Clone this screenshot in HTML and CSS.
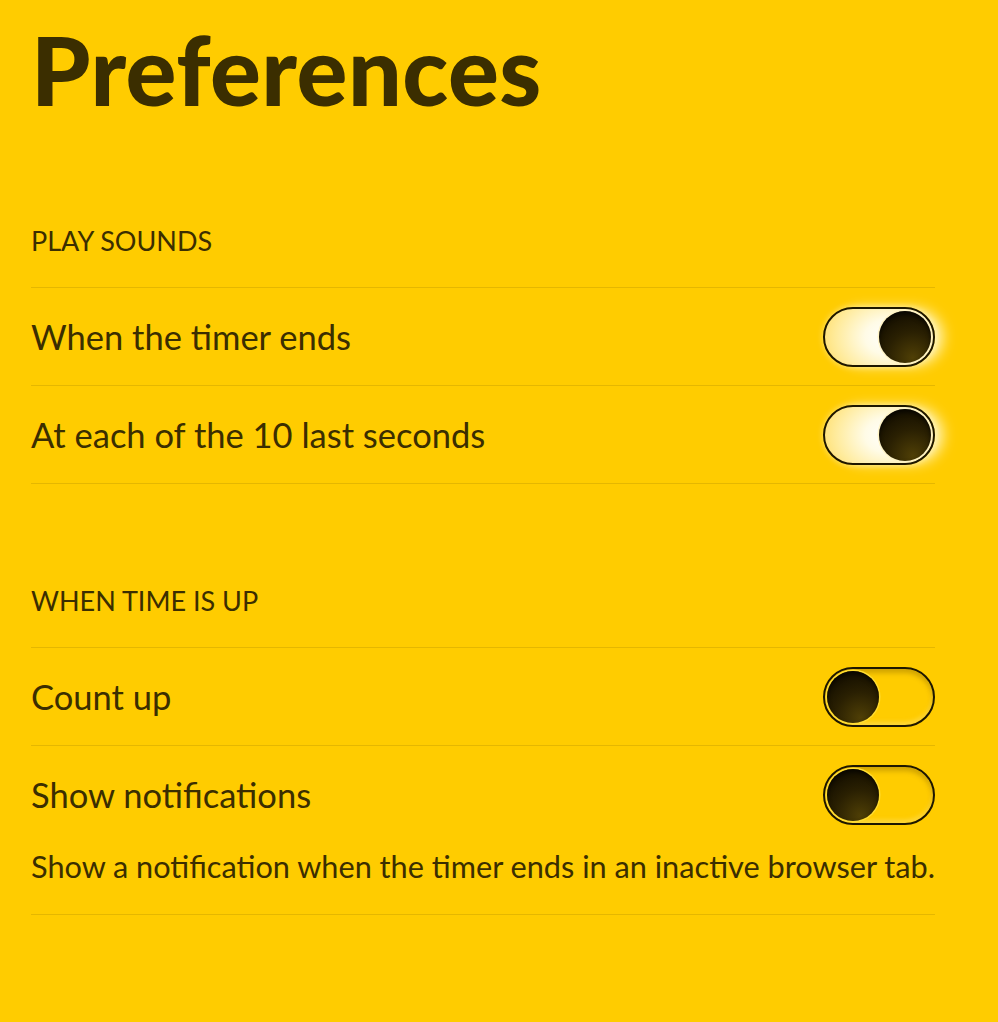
FILE: index.html
```html
<!DOCTYPE html>
<html lang="en">
<head>
    <meta charset="UTF-8">
    <meta name="viewport" content="width=device-width, initial-scale=1.0">
    <title>Preferences</title>
    <link rel="stylesheet" href="styles.css">
</head>
<body>
    <main class="prefs">
        <h1 class="prefs-title">Preferences</h1>

        <section class="prefs-section">
            <h2 class="section-title">Play sounds</h2>
            <div class="pref-row">
                <span class="pref-label">When the timer ends</span>
                <label class="switch">
                    <input type="checkbox" checked>
                    <span class="track"><span class="knob"></span></span>
                </label>
            </div>
            <div class="pref-row">
                <span class="pref-label">At each of the 10 last seconds</span>
                <label class="switch">
                    <input type="checkbox" checked>
                    <span class="track"><span class="knob"></span></span>
                </label>
            </div>
        </section>

        <section class="prefs-section">
            <h2 class="section-title">When time is up</h2>
            <div class="pref-row">
                <span class="pref-label">Count up</span>
                <label class="switch">
                    <input type="checkbox">
                    <span class="track"><span class="knob"></span></span>
                </label>
            </div>
            <div class="pref-row pref-row-desc">
                <div class="pref-line">
                    <span class="pref-label">Show notifications</span>
                    <label class="switch">
                        <input type="checkbox">
                        <span class="track"><span class="knob"></span></span>
                    </label>
                </div>
                <p class="pref-desc">Show a notification when the timer ends in an inactive browser tab.</p>
            </div>
        </section>
    </main>
</body>
</html>
```

FILE: styles.css
```css
body {
    margin: 0;
    background: #ffcc00;
    color: #3b2e00;
    font-family: 'Lato', 'Noto Sans', sans-serif;
    min-height: 100vh;
}

.prefs {
    width: 904px;
    padding: 22px 0 0 31px;
}

.prefs-title {
    margin: 0 0 106px 0;
    font-size: 95px;
    line-height: 1;
    font-weight: 900;
    letter-spacing: 0.5px;
}

.prefs-section + .prefs-section {
    margin-top: 99px;
}

.section-title {
    margin: 0;
    padding-bottom: 28px;
    border-bottom: 1px solid rgba(0, 0, 0, 0.1);
    font-size: 27px;
    line-height: 36px;
    font-weight: 400;
    text-transform: uppercase;
}

.pref-row {
    display: flex;
    align-items: center;
    justify-content: space-between;
    height: 97px;
    border-bottom: 1px solid rgba(0, 0, 0, 0.1);
}

.pref-row-desc {
    display: block;
    height: auto;
    padding-bottom: 29px;
}

.pref-line {
    display: flex;
    align-items: center;
    justify-content: space-between;
    height: 97px;
}

.pref-label {
    font-size: 34.5px;
}

.pref-desc {
    margin: 6px 0 0 0;
    font-size: 30.7px;
    line-height: 36px;
}

/* toggle switch */
.switch input {
    display: none;
}

.track {
    box-sizing: border-box;
    display: flex;
    align-items: center;
    width: 112px;
    height: 60px;
    padding: 0 2px;
    border: 2px solid #1e1700;
    border-radius: 30px;
    background: #ffcc00;
    box-shadow: inset 0 4px 5px rgba(120, 90, 0, 0.35), inset 0 -3px 4px rgba(255, 230, 120, 0.5);
}

.knob {
    width: 52px;
    height: 52px;
    border-radius: 50%;
    background: radial-gradient(circle at 65% 90%, #4f3f06 0%, #2a2002 45%, #150f00 80%);
    box-shadow: 0 0 0 1.5px #ffdd33, inset 0 3px 4px rgba(0, 0, 0, 0.6);
}

.switch input:checked + .track {
    justify-content: flex-end;
    background: radial-gradient(ellipse 60% 90% at 58% 50%, #ffffff 0%, #fffbe6 35%, #ffeb9c 80%, #ffe27a 100%);
    box-shadow: 10px 0 14px -2px rgba(255, 255, 235, 0.8), 0 0 6px rgba(255, 255, 240, 0.45);
}

.switch input:checked + .track .knob {
    box-shadow: 0 0 0 1.5px #fff3c4, inset 0 3px 4px rgba(0, 0, 0, 0.6);
}
```
